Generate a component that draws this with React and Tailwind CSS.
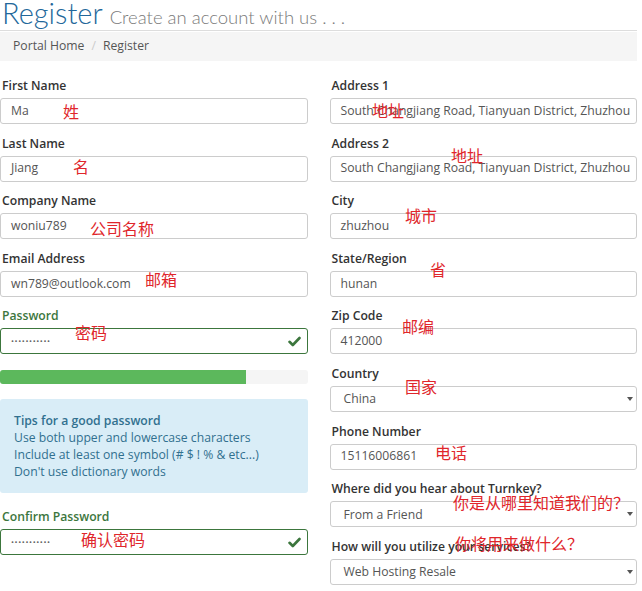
import React from "react";

const body = { fontFamily: '"Open Sans", "Noto Sans", sans-serif' };

const leftFields = [
  { label: "First Name", value: "Ma" },
  { label: "Last Name", value: "Jiang" },
  { label: "Company Name", value: "woniu789" },
  { label: "Email Address", value: "wn789@outlook.com" },
];

const rightFields = [
  { label: "Address 1", value: "South Changjiang Road, Tianyuan District, Zhuzhou" },
  { label: "Address 2", value: "South Changjiang Road, Tianyuan District, Zhuzhou" },
  { label: "City", value: "zhuzhou" },
  { label: "State/Region", value: "hunan" },
  { label: "Zip Code", value: "412000" },
  { label: "Country", value: "China", select: true },
  { label: "Phone Number", value: "15116006861" },
  { label: "Where did you hear about Turnkey?", value: "From a Friend", select: true },
  { label: "How will you utilize your services?", value: "Web Hosting Resale", select: true },
];

// red hand-written notes laid over the form
const notes = [
  { text: "姓", x: 63, y: 103 },
  { text: "名", x: 73, y: 158 },
  { text: "公司名称", x: 90, y: 220 },
  { text: "邮箱", x: 145, y: 271 },
  { text: "密码", x: 75, y: 324 },
  { text: "确认密码", x: 81, y: 531 },
  { text: "地址", x: 372, y: 102 },
  { text: "地址", x: 451, y: 147 },
  { text: "城市", x: 405, y: 207 },
  { text: "省", x: 430, y: 261 },
  { text: "邮编", x: 402, y: 318 },
  { text: "国家", x: 405, y: 378 },
  { text: "电话", x: 435, y: 444 },
  { text: "你是从哪里知道我们的？", x: 453, y: 494 },
  { text: "你将用来做什么？", x: 455, y: 535 },
];

const Check = () => (
  <svg width="13" height="11" viewBox="0 0 13 11" className="absolute right-[6px] top-[7px]">
    <path d="M1.5 5.8 L4.8 9 L11.5 2" fill="none" stroke="#3c763d" strokeWidth="2.6" strokeLinecap="round" strokeLinejoin="round" />
  </svg>
);

const Field = ({ label, value, select }) => (
  <div className="mb-[10.6px]">
    <div className="h-[18px] leading-[18px] pl-[2px] text-[12.2px] font-semibold text-[#333] mb-[3px]">{label}</div>
    <div className="relative h-[26px] border border-[#ccc] rounded-[3px] bg-white flex items-center text-[12.2px] text-[#555] whitespace-nowrap overflow-hidden">
      <span className={select ? "pl-[13px] pt-[1px]" : "pl-[10px]"}>{value}</span>
      {select && (
        <span className="absolute right-[3px] top-[10px] w-0 h-0 border-l-[3px] border-r-[3px] border-t-[4px] border-l-transparent border-r-transparent border-t-[#555]" />
      )}
    </div>
  </div>
);

const PasswordField = ({ label }) => (
  <div>
    <div className="h-[18px] leading-[18px] pl-[2px] text-[12.2px] font-semibold text-[#3c763d] mb-[3px]">{label}</div>
    <div className="relative h-[26px] border border-[#3c763d] rounded-[3px] bg-white flex items-center">
      <span className="pl-[10px] text-[8px] tracking-[0.6px] text-[#666] leading-none">•••••••••••</span>
      <Check />
    </div>
  </div>
);

export default function App() {
  return (
    <div className="relative w-[642px] bg-white" style={body}>
      <div className="w-[637px]">
        <div className="flex items-baseline h-[31px] border-b border-[#ddd] pl-[2px]" style={{ fontFamily: 'Lato, "Open Sans", sans-serif' }}>
          <span className="text-[29px] leading-[26px] font-light text-[#22679a]">Register</span>
          <span className="ml-[7px] text-[18.5px] leading-[26px] font-light text-[#7a7a7a]">
            Create an account with us . . .
          </span>
        </div>
        <div className="h-[29px] bg-[#f5f5f5] flex items-center pl-[13px] text-[12.2px] text-[#555] mt-[1px]">
          <span>Portal Home</span>
          <span className="px-[7px] text-[#ccc]">/</span>
          <span>Register</span>
        </div>

        <div className="grid grid-cols-2 gap-[22px] pt-[16px]">
          <div>
            {leftFields.map((f) => (
              <Field key={f.label} {...f} />
            ))}
            <PasswordField label="Password" />
            <div className="mt-[16px] h-[14px] bg-[#f5f5f5] rounded-[3px] overflow-hidden">
              <div className="h-full w-[80%] bg-[#5cb85c]" />
            </div>
            <div className="mt-[15px] bg-[#d9edf7] rounded-[3px] px-[14px] py-[13px] text-[12.2px] leading-[17px] text-[#31708f]">
              <div className="font-semibold">Tips for a good password</div>
              <div>Use both upper and lowercase characters</div>
              <div>Include at least one symbol (# $ ! % &amp; etc...)</div>
              <div>Don't use dictionary words</div>
            </div>
            <div className="mt-[15px]">
              <PasswordField label="Confirm Password" />
            </div>
          </div>
          <div>
            {rightFields.map((f) => (
              <Field key={f.label} {...f} />
            ))}
          </div>
        </div>
      </div>

      {notes.map((n, i) => (
        <span
          key={i}
          className="absolute text-[16px] leading-none text-[#e0262b] whitespace-nowrap"
          style={{ left: n.x, top: n.y, fontFamily: '"Noto Sans CJK SC", sans-serif' }}
        >
          {n.text}
        </span>
      ))}
    </div>
  );
}
